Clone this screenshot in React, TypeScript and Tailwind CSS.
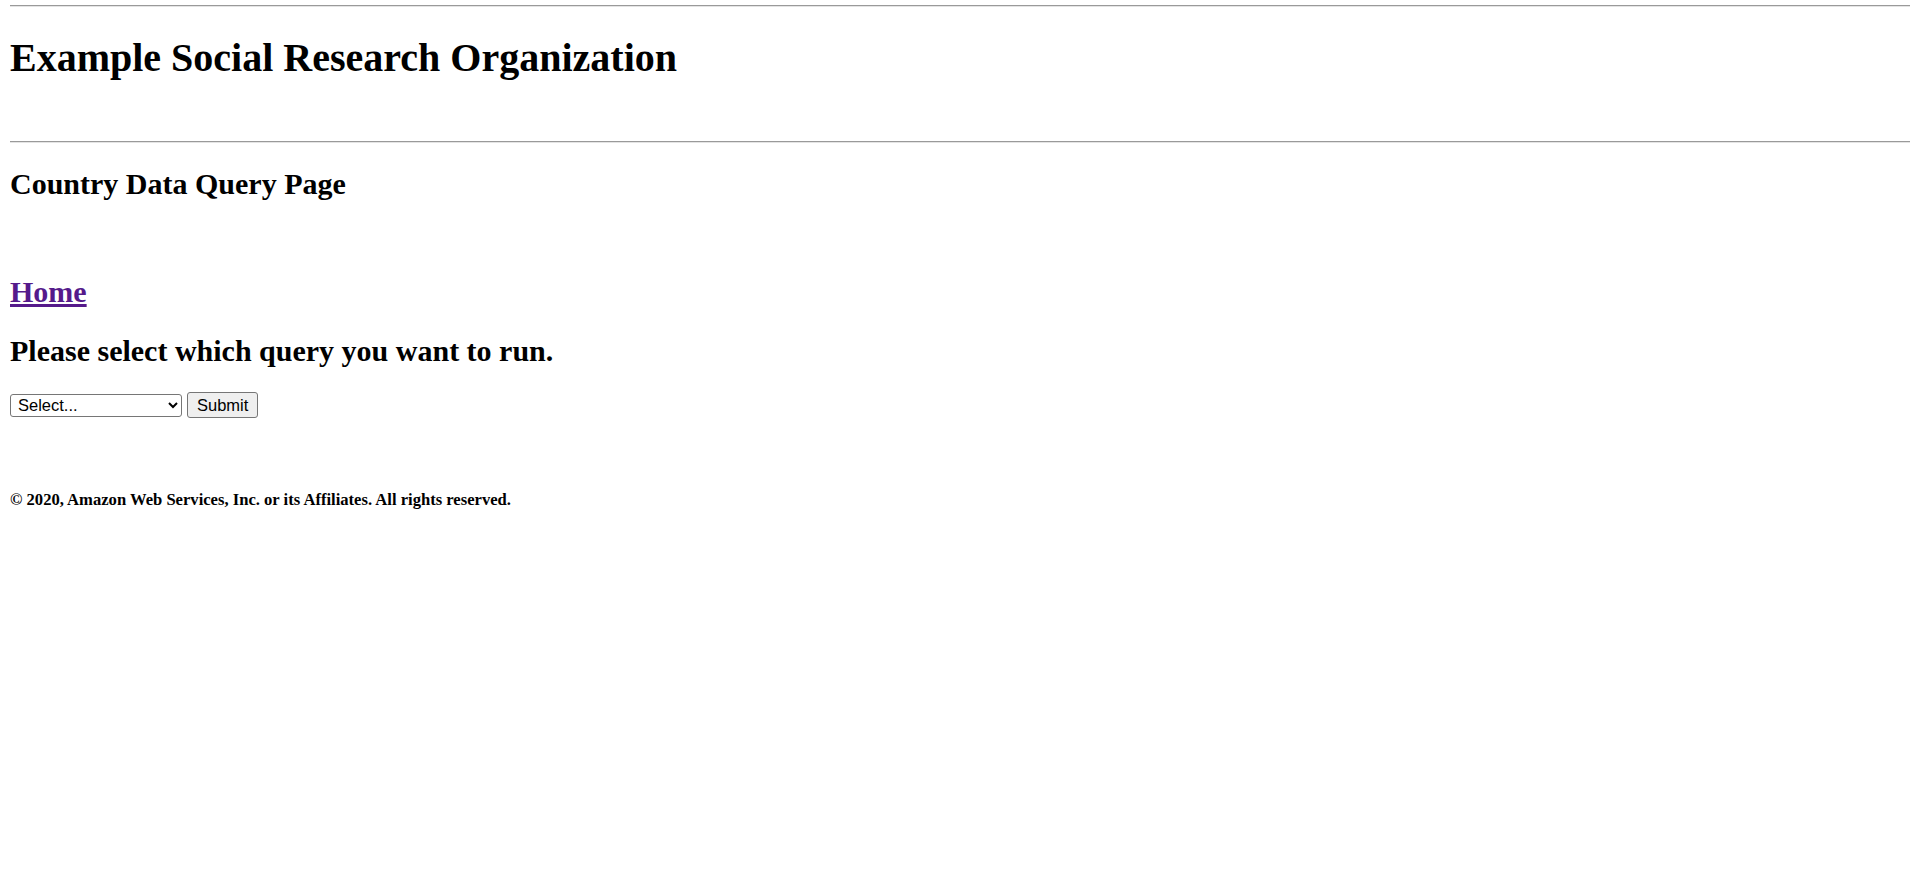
import { useState } from "react";

function App() {
  const [query, setQuery] = useState("");

  return (
    <div className="min-h-screen bg-white px-[10px] text-black font-['Liberation_Serif',serif]">
      <hr className="mt-[5px] border-0 border-t border-b border-t-[#9a9a9a] border-b-[#e4e4e4]" />

      <h1 className="mt-[28px] text-[40px] leading-[46px] font-bold">
        Example Social Research Organization
      </h1>

      <hr className="mt-[60px] border-0 border-t border-b border-t-[#9a9a9a] border-b-[#e4e4e4]" />

      <h2 className="mt-[24px] text-[30px] leading-[34px] font-bold">
        Country Data Query Page
      </h2>

      <h2 className="mt-[74px] text-[30px] leading-[34px] font-bold">
        <a href="#" className="text-[#551a8b] underline">
          Home
        </a>
      </h2>

      <h2 className="mt-[25px] text-[30px] leading-[34px] font-bold">
        Please select which query you want to run.
      </h2>

      <form
        className="mt-[24px] flex items-center gap-[5px]"
        onSubmit={(e) => e.preventDefault()}
      >
        <select
          value={query}
          onChange={(e) => setQuery(e.target.value)}
          className="w-[172px] h-[23px] border border-[#767676] rounded-[3px] bg-white pl-[3px] text-[16.5px] font-['Liberation_Sans',Arial,sans-serif] text-black"
        >
          <option value="">Select...</option>
          <option value="1">Query 1</option>
          <option value="2">Query 2</option>
        </select>
        <button
          type="submit"
          className="h-[26px] px-[9px] border border-[#767676] rounded-[3px] bg-[#efefef] text-[16.5px] leading-[20px] font-['Liberation_Sans',Arial,sans-serif] text-black"
        >
          Submit
        </button>
      </form>

      <h5 className="mt-[72px] text-[16.6px] leading-[19px] font-bold">
        © 2020, Amazon Web Services, Inc. or its Affiliates. All rights reserved.
      </h5>
    </div>
  );
}

export default App;
